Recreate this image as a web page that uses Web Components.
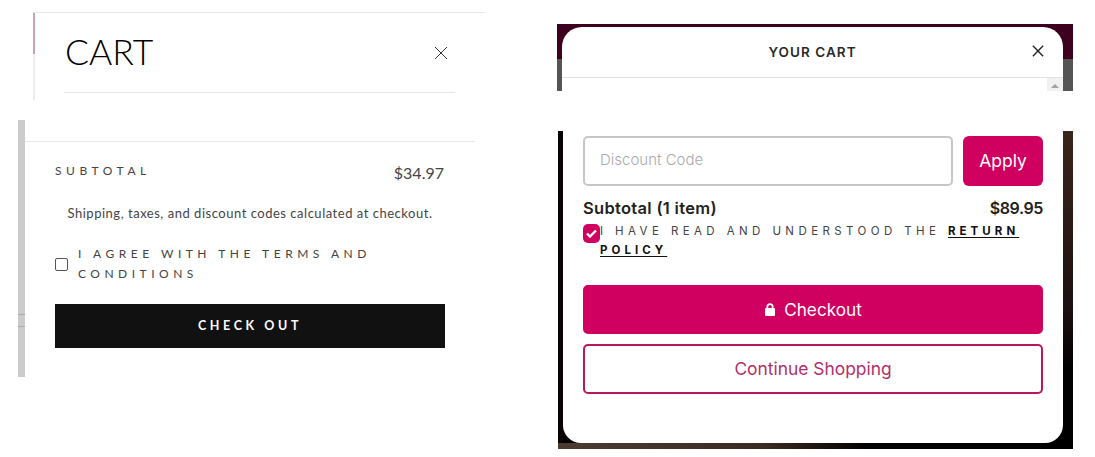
<!DOCTYPE html>
<html>
<head>
<meta charset="utf-8">
<title>Cart</title>
<style>
	html, body { margin: 0; background: #fff; }
	body { width: 1095px; height: 457px; overflow: hidden; position: relative; }
	/* the page is a collage of four crops, so each one sits at its own place */
	.crop { position: absolute; }
	#a { left: 33px; top: 12px; }
	#b { left: 18px; top: 120px; }
	#c { left: 557px; top: 24px; }
	#d { left: 558px; top: 131px; }
</style>
</head>
<body>
<plain-head class="crop" id="a"></plain-head>
<plain-summary class="crop" id="b"></plain-summary>
<pink-head class="crop" id="c"></pink-head>
<pink-summary class="crop" id="d"></pink-summary>

<script>
const closeIcon = (size, stroke, color) => /*html*/`
	<svg width="${size}" height="${size}" viewBox="0 0 14 14" fill="none" stroke="${color}" stroke-width="${stroke}">
		<path d="M1 1 13 13M13 1 1 13"/>
	</svg>`

class PlainHead extends HTMLElement {
	constructor() {
		super()
		this.attachShadow({mode:'open'}).innerHTML = /*html*/`
		<style>
			:host {
				display: block;
				width: 452px;
				height: 88px;
				box-sizing: border-box;
				border-top: solid 1px #e6e6e6;
				border-left: solid 2px #ececec;
			}
			:host::before {
				content: '';
				position: absolute;
				left: -2px;
				top: 0;
				width: 2px;
				height: 41px;
				background: #cf9fba;
			}
			.inner {
				margin: 0 30px 0 29px;
				height: 80px;
				box-sizing: border-box;
				border-bottom: solid 1px #e6e6e6;
				display: flex;
				align-items: center;
				justify-content: space-between;
				padding: 0 7px 0 1px;
			}
			h2 {
				margin: 0 0 2px;
				font: 300 35.5px/1 "Lato", "Liberation Sans", sans-serif;
				color: #000;
			}
		</style>
		<div class="inner">
			<h2>CART</h2>
			${closeIcon(14, 1, '#333')}
		</div>`
	}
}

class PlainSummary extends HTMLElement {
	constructor() {
		super()
		this.attachShadow({mode:'open'}).innerHTML = /*html*/`
		<style>
			:host {
				display: block;
				width: 457px;
				height: 257px;
				box-sizing: border-box;
				border-left: solid 7px #cbcbcb;
				font-family: "Lato", "Liberation Sans", sans-serif;
				color: #444;
			}
			/* little grip on the scrollbar */
			:host::before {
				content: '';
				position: absolute;
				left: -7px;
				top: 194px;
				width: 7px;
				height: 13px;
				box-sizing: border-box;
				border-top: solid 1px #aaa;
				border-bottom: solid 1px #aaa;
			}
			.top {
				height: 21px;
				border-bottom: solid 1px #e6e6e6;
			}
			.body {
				padding: 0 30px;
			}
			.row {
				display: flex;
				justify-content: space-between;
				align-items: center;
				padding: 20px 1px 0 0;
				height: 20px;
			}
			.label {
				font-size: 12px;
				letter-spacing: 4.55px;
				margin-top: -3px;
			}
			.price { font-size: 16px; }
			.note {
				margin: 22px 0 0;
				font-size: 13px;
				line-height: 18px;
				text-align: center;
				letter-spacing: .52px;
			}
			.agree {
				display: flex;
				align-items: center;
				gap: 10px;
				margin-top: 22px;
				font-size: 12px;
				line-height: 20px;
				letter-spacing: 4.5px;
			}
			.box {
				flex: none;
				width: 11px;
				height: 11px;
				border: solid 1px #555;
				border-radius: 2px;
			}
			.buy {
				margin-top: 20px;
				height: 44px;
				background: #111;
				color: #fff;
				font-size: 12.5px;
				font-weight: 700;
				letter-spacing: 3.6px;
				display: flex;
				align-items: center;
				justify-content: center;
				padding-bottom: 2px;
				box-sizing: border-box;
			}
		</style>
		<div class="top"></div>
		<div class="body">
			<div class="row"><span class="label">SUBTOTAL</span><span class="price">$34.97</span></div>
			<p class="note">Shipping, taxes, and discount codes calculated at checkout.</p>
			<div class="agree"><span class="box"></span><span>I AGREE WITH THE TERMS AND<br>CONDITIONS</span></div>
			<div class="buy">CHECK OUT</div>
		</div>`
	}
}

class PinkHead extends HTMLElement {
	constructor() {
		super()
		this.attachShadow({mode:'open'}).innerHTML = /*html*/`
		<style>
			:host {
				display: block;
				width: 516px;
				height: 67px;
				padding: 3px 10px 0 5px;
				box-sizing: border-box;
				background: linear-gradient(#3d001f 0 35px, #555 35px);
				font-family: "Inter", "Liberation Sans", sans-serif;
				color: #2a2a2a;
			}
			.modal {
				height: 64px;
				background: #fff;
				border-radius: 20px 20px 0 0;
			}
			header {
				height: 51px;
				box-sizing: border-box;
				border-bottom: solid 1px #e2e2e2;
				display: flex;
				align-items: center;
				justify-content: center;
				position: relative;
				font-size: 13.5px;
				font-weight: 600;
				letter-spacing: 1.05px;
			}
			header svg {
				position: absolute;
				right: 19px;
				top: 18px;
			}
			.track {
				margin-left: auto;
				width: 16px;
				height: 13px;
				background: #f1f1f1;
				display: flex;
				align-items: center;
				justify-content: center;
			}
			.track i {
				width: 0;
				height: 0;
				border: solid 4px transparent;
				border-top: 0;
				border-bottom: solid 4px #a3a3a3;
				margin-top: 3px;
			}
		</style>
		<div class="modal">
			<header>YOUR CART ${closeIcon(12, 1.6, '#222')}</header>
			<div class="track"><i></i></div>
		</div>`
	}
}

class PinkButton extends HTMLElement {
	constructor() {
		super()
		this.attachShadow({mode:'open'}).innerHTML = /*html*/`
		<style>
			:host {
				display: flex;
				align-items: center;
				justify-content: center;
				gap: 8px;
				box-sizing: border-box;
				height: 49px;
				border-radius: 5px;
				background: #d00060;
				color: #fff;
				font-size: 17.2px;
				border: solid 2px #d00060;
			}
			:host([outline]) {
				background: #fff;
				color: #b0306a;
				border-color: #b8185f;
				height: 50px;
				font-size: 17.4px;
				padding-bottom: 2px;
			}
		</style>
		<slot></slot>`
	}
}

class PinkSummary extends HTMLElement {
	constructor() {
		super()
		this.attachShadow({mode:'open'}).innerHTML = /*html*/`
		<style>
			:host {
				display: block;
				width: 515px;
				height: 318px;
				box-sizing: border-box;
				padding: 0 10px 6px 5px;
				background:
					linear-gradient(90deg, #4b3b31, #3a2a22 40%, #000 60%) bottom / 100% 6px no-repeat,
					linear-gradient(90deg, #0a0505 0 5px, transparent 5px),
					linear-gradient(#3a251a, #1e1010 55%, #000 75%);
				font-family: "Inter", "Liberation Sans", sans-serif;
				color: #222;
			}
			.modal {
				height: 312px;
				box-sizing: border-box;
				background: #fff;
				border-radius: 0 0 18px 18px;
				padding: 5px 20px 0;
			}
			.code {
				display: flex;
				gap: 10px;
			}
			.input {
				flex: 1;
				height: 50px;
				box-sizing: border-box;
				border: solid 2px #c6c6c6;
				border-radius: 5px;
				padding: 0 0 3px 15px;
				display: flex;
				align-items: center;
				color: #aaa;
				font-size: 15px;
				font-weight: 300;
			}
			.apply {
				width: 80px;
				height: 50px;
				box-sizing: border-box;
				padding-bottom: 2px;
				border-radius: 6px;
				background: #d00060;
				color: #fff;
				font-size: 17.5px;
				display: flex;
				align-items: center;
				justify-content: center;
			}
			.row {
				display: flex;
				justify-content: space-between;
				margin-top: 12px;
				font-size: 16.5px;
				line-height: 20px;
				font-weight: 600;
				letter-spacing: .3px;
			}
			.row span + span {
				font-size: 16px;
				letter-spacing: -.4px;
			}
			.agree {
				display: flex;
				margin-top: 4px;
				font-size: 11.5px;
				line-height: 19px;
				letter-spacing: 4.4px;
				color: #444;
			}
			.check {
				flex: none;
				width: 17px;
				height: 19px;
				border-radius: 5px;
				background: #d00060;
				display: flex;
				align-items: center;
				justify-content: center;
				margin-top: 2px;
			}
			a {
				color: #111;
				font-weight: 700;
				letter-spacing: 4.05px;
				text-decoration: underline;
				text-underline-offset: 2px;
			}
			.actions {
				display: flex;
				flex-direction: column;
				gap: 10px;
				margin-top: 25px;
			}
		</style>
		<div class="modal">
			<div class="code">
				<div class="input">Discount Code</div>
				<div class="apply">Apply</div>
			</div>
			<div class="row"><span>Subtotal (1 item)</span><span>$89.95</span></div>
			<div class="agree">
				<span class="check">
					<svg width="11" height="9" viewBox="0 0 11 9" fill="none" stroke="#fff" stroke-width="2.4"><path d="M1 4.5 4 7.5 10 1.5"/></svg>
				</span>
				<span>I HAVE READ AND UNDERSTOOD THE <a>RETURN</a> <a>POLICY</a></span>
			</div>
			<div class="actions">
				<pink-button>
					<svg width="12" height="13" viewBox="0 0 12 13" fill="#fff"><path d="M2.5 5V3.8a3.5 3.5 0 0 1 7 0V5h.5a1 1 0 0 1 1 1v6a1 1 0 0 1-1 1H2a1 1 0 0 1-1-1V6a1 1 0 0 1 1-1zM4.2 5h3.6V3.8a1.8 1.8 0 0 0-3.6 0z"/></svg>
					Checkout
				</pink-button>
				<pink-button outline>Continue Shopping</pink-button>
			</div>
		</div>`
	}
}

customElements.define('plain-head', PlainHead)
customElements.define('plain-summary', PlainSummary)
customElements.define('pink-head', PinkHead)
customElements.define('pink-button', PinkButton)
customElements.define('pink-summary', PinkSummary)
</script>
</body>
</html>
